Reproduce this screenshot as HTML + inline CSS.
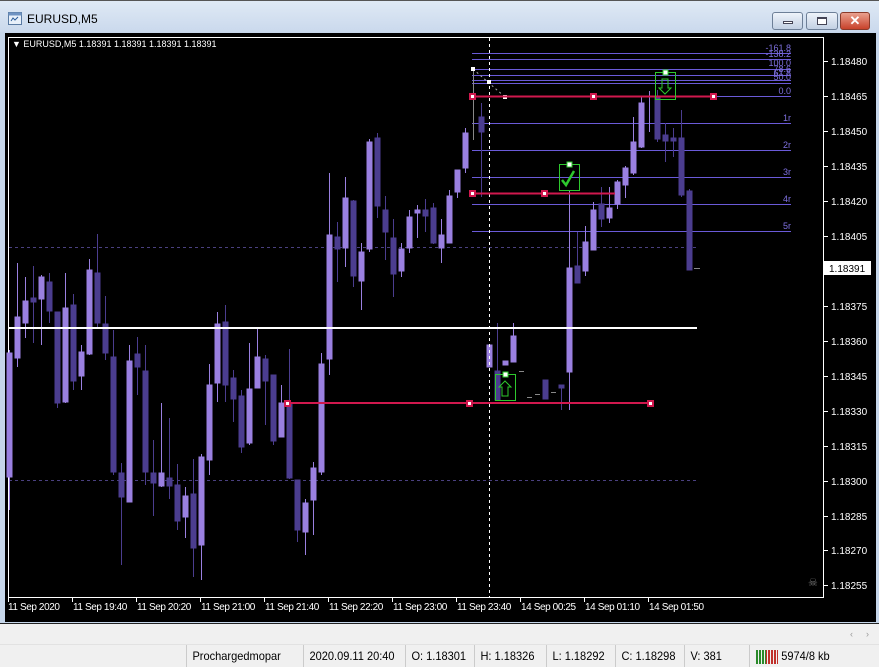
<!DOCTYPE html>
<html><head><meta charset="utf-8"><style>
*{margin:0;padding:0;box-sizing:border-box}
body{width:879px;height:667px;overflow:hidden;position:relative;background:#f0f0f0;font-family:"Liberation Sans",sans-serif}
.title{position:absolute;left:0;top:0;width:879px;height:34px;background:linear-gradient(#dfe9f5,#c9d8ec);border-top:1px solid #555}
.frame{position:absolute;left:0;top:32px;width:879px;height:592px;background:#c6d6ea}
.chart{position:absolute;left:5px;top:33px;width:871px;height:589px;background:#000}
.btn{position:absolute;top:11px;height:18px;border:1px solid #6d7f97;border-radius:3px;background:linear-gradient(#eef3fa,#c2d0e3)}
.sb{position:absolute;top:645px;height:22px;font-size:12px;color:#000;line-height:22px;border-left:1px solid #c8c8c8;padding-left:6px;transform:scaleX(.92);transform-origin:left}
</style></head><body>
<div class="title">
<svg style="position:absolute;left:8px;top:11px" width="14" height="13"><rect x="0.5" y="0.5" width="13" height="12" fill="#e8f0fa" stroke="#5a7ba3"/><rect x="0.5" y="0.5" width="13" height="3" fill="#6f93c2"/><path d="M3 9 L5 6 L7 8 L10 5" stroke="#2a5c9a" fill="none"/></svg>
<div style="position:absolute;left:27px;top:11px;font-size:12px;color:#000">EURUSD,M5</div>
<div class="btn" style="left:772px;width:31px"><div style="position:absolute;left:10px;top:8px;width:10px;height:3px;background:#fff;border:1px solid #445"></div></div>
<div class="btn" style="left:806px;width:32px"><div style="position:absolute;left:10px;top:4px;width:10px;height:8px;background:#fff;border:1px solid #445;border-top-width:2px"></div></div>
<div class="btn" style="left:840px;width:30px;background:linear-gradient(#e9a08e,#c8422b);border-color:#8a3a2a;color:#fff;font-size:13px;font-weight:bold;text-align:center;line-height:16px">✕</div>
</div>
<div class="frame"></div>
<div class="chart"></div>
<svg style="position:absolute;left:0;top:0" width="879" height="667" font-family="Liberation Sans, sans-serif">
<rect x="8.5" y="37.5" width="815" height="560" fill="none" stroke="#fff"/>
<text x="12" y="47" font-size="9" fill="#fff">▼ EURUSD,M5  1.18391 1.18391 1.18391 1.18391</text>
<g stroke="#4a4080" stroke-dasharray="3,3"><line x1="9" y1="247.5" x2="697" y2="247.5"/><line x1="9" y1="480.5" x2="697" y2="480.5"/></g>
<g stroke="#6a5ad8"><line x1="472" y1="53.5" x2="791" y2="53.5"/><line x1="472" y1="59.5" x2="791" y2="59.5"/><line x1="472" y1="69.5" x2="791" y2="69.5"/><line x1="472" y1="75.5" x2="791" y2="75.5"/><line x1="472" y1="80.5" x2="791" y2="80.5"/><line x1="472" y1="83.5" x2="791" y2="83.5"/><line x1="472" y1="96.5" x2="791" y2="96.5"/><line x1="472" y1="123.5" x2="791" y2="123.5"/><line x1="472" y1="150.5" x2="791" y2="150.5"/><line x1="472" y1="177.5" x2="791" y2="177.5"/><line x1="472" y1="204.5" x2="791" y2="204.5"/><line x1="472" y1="231.5" x2="791" y2="231.5"/></g>
<g font-size="9" fill="#7e70e0" text-anchor="end"><text x="791" y="51">-161.8</text><text x="791" y="57">-138.2</text><text x="791" y="66">100.0</text><text x="791" y="72">78.6</text><text x="791" y="76">61.8</text><text x="791" y="80">50.0</text><text x="791" y="94">0.0</text><text x="791" y="121">1r</text><text x="791" y="148">2r</text><text x="791" y="175">3r</text><text x="791" y="202">4r</text><text x="791" y="229">5r</text></g>
<line x1="473.5" y1="69" x2="473.5" y2="140" stroke="#888"/><path d="M473 69 L505 97" stroke="#aaa" stroke-dasharray="2,3"/>
<g fill="#fff"><rect x="471" y="67" width="4" height="4"/><rect x="487" y="80" width="4" height="4"/><rect x="503" y="95" width="4" height="4"/></g>
<g id="c">
<g stroke="#9a80e0" fill="#9a80e0">
<line x1="17.5" y1="263" x2="17.5" y2="367"/><rect x="15" y="317" width="5" height="41"/>
<line x1="9.5" y1="350" x2="9.5" y2="510"/><rect x="7" y="353" width="5" height="124"/>
<line x1="25.5" y1="277" x2="25.5" y2="338"/><rect x="23" y="301" width="5" height="22"/>
<line x1="41.5" y1="275" x2="41.5" y2="345"/><rect x="39" y="277" width="5" height="22"/>
<line x1="65.5" y1="273" x2="65.5" y2="403"/><rect x="63" y="308" width="5" height="94"/>
<line x1="81.5" y1="345" x2="81.5" y2="390"/><rect x="79" y="352" width="5" height="24"/>
<line x1="89.5" y1="259" x2="89.5" y2="355"/><rect x="87" y="270" width="5" height="84"/>
<line x1="129.5" y1="345" x2="129.5" y2="502"/><rect x="127" y="361" width="5" height="141"/>
<line x1="161.5" y1="403" x2="161.5" y2="487"/><rect x="159" y="473" width="5" height="13"/>
<line x1="185.5" y1="487" x2="185.5" y2="538"/><rect x="183" y="496" width="5" height="21"/>
<line x1="201.5" y1="454" x2="201.5" y2="580"/><rect x="199" y="457" width="5" height="88"/>
<line x1="209.5" y1="364" x2="209.5" y2="475"/><rect x="207" y="385" width="5" height="75"/>
<line x1="217.5" y1="312" x2="217.5" y2="402"/><rect x="215" y="324" width="5" height="59"/>
<line x1="249.5" y1="343" x2="249.5" y2="445"/><rect x="247" y="389" width="5" height="54"/>
<line x1="257.5" y1="327" x2="257.5" y2="388"/><rect x="255" y="357" width="5" height="31"/>
<line x1="281.5" y1="385" x2="281.5" y2="437"/><rect x="279" y="403" width="5" height="34"/>
<line x1="305.5" y1="499" x2="305.5" y2="555"/><rect x="303" y="503" width="5" height="29"/>
<line x1="313.5" y1="462" x2="313.5" y2="535"/><rect x="311" y="468" width="5" height="32"/>
<line x1="321.5" y1="353" x2="321.5" y2="475"/><rect x="319" y="364" width="5" height="108"/>
<line x1="329.5" y1="173" x2="329.5" y2="375"/><rect x="327" y="235" width="5" height="124"/>
<line x1="345.5" y1="177" x2="345.5" y2="267"/><rect x="343" y="198" width="5" height="50"/>
<line x1="361.5" y1="243" x2="361.5" y2="310"/><rect x="359" y="252" width="5" height="29"/>
<line x1="369.5" y1="139" x2="369.5" y2="252"/><rect x="367" y="142" width="5" height="107"/>
<line x1="401.5" y1="243" x2="401.5" y2="277"/><rect x="399" y="249" width="5" height="22"/>
<line x1="409.5" y1="210" x2="409.5" y2="253"/><rect x="407" y="217" width="5" height="31"/>
<line x1="417.5" y1="205" x2="417.5" y2="238"/><rect x="415" y="210" width="5" height="3"/>
<line x1="441.5" y1="219" x2="441.5" y2="263"/><rect x="439" y="235" width="5" height="13"/>
<line x1="449.5" y1="190" x2="449.5" y2="243"/><rect x="447" y="196" width="5" height="47"/>
<line x1="457.5" y1="170" x2="457.5" y2="198"/><rect x="455" y="170" width="5" height="22"/>
<line x1="465.5" y1="128" x2="465.5" y2="173"/><rect x="463" y="133" width="5" height="35"/>
<rect x="487" y="345" width="5" height="22"/>
<rect x="503" y="361" width="5" height="4"/>
<line x1="513.5" y1="323" x2="513.5" y2="362"/><rect x="511" y="336" width="5" height="26"/>
<line x1="569.5" y1="190" x2="569.5" y2="410"/><rect x="567" y="268" width="5" height="104"/>
<line x1="585.5" y1="226" x2="585.5" y2="276"/><rect x="583" y="242" width="5" height="29"/>
<line x1="593.5" y1="202" x2="593.5" y2="250"/><rect x="591" y="210" width="5" height="40"/>
<line x1="609.5" y1="187" x2="609.5" y2="223"/><rect x="607" y="208" width="5" height="10"/>
<line x1="617.5" y1="180" x2="617.5" y2="209"/><rect x="615" y="182" width="5" height="22"/>
<line x1="625.5" y1="166" x2="625.5" y2="198"/><rect x="623" y="168" width="5" height="17"/>
<line x1="633.5" y1="117" x2="633.5" y2="175"/><rect x="631" y="142" width="5" height="31"/>
<line x1="641.5" y1="97" x2="641.5" y2="148"/><rect x="639" y="103" width="5" height="44"/>
<line x1="649.5" y1="91" x2="649.5" y2="132"/>
</g>
<g stroke="#4b3d8f" fill="#4b3d8f">
<line x1="33.5" y1="266" x2="33.5" y2="343"/><rect x="31" y="298" width="5" height="4"/>
<line x1="49.5" y1="273" x2="49.5" y2="323"/><rect x="47" y="282" width="5" height="29"/>
<line x1="57.5" y1="312" x2="57.5" y2="408"/><rect x="55" y="312" width="5" height="91"/>
<line x1="73.5" y1="294" x2="73.5" y2="390"/><rect x="71" y="305" width="5" height="76"/>
<line x1="97.5" y1="234" x2="97.5" y2="327"/><rect x="95" y="273" width="5" height="50"/>
<line x1="105.5" y1="296" x2="105.5" y2="360"/><rect x="103" y="324" width="5" height="29"/>
<line x1="113.5" y1="330" x2="113.5" y2="475"/><rect x="111" y="357" width="5" height="115"/>
<line x1="121.5" y1="463" x2="121.5" y2="565"/><rect x="119" y="473" width="5" height="24"/>
<line x1="137.5" y1="337" x2="137.5" y2="395"/><rect x="135" y="354" width="5" height="13"/>
<line x1="145.5" y1="345" x2="145.5" y2="485"/><rect x="143" y="371" width="5" height="101"/>
<line x1="153.5" y1="440" x2="153.5" y2="516"/><rect x="151" y="473" width="5" height="10"/>
<line x1="169.5" y1="418" x2="169.5" y2="499"/><rect x="167" y="478" width="5" height="8"/>
<line x1="177.5" y1="464" x2="177.5" y2="530"/><rect x="175" y="485" width="5" height="36"/>
<line x1="193.5" y1="459" x2="193.5" y2="577"/><rect x="191" y="494" width="5" height="54"/>
<line x1="225.5" y1="305" x2="225.5" y2="402"/><rect x="223" y="322" width="5" height="63"/>
<line x1="233.5" y1="370" x2="233.5" y2="422"/><rect x="231" y="378" width="5" height="21"/>
<line x1="241.5" y1="390" x2="241.5" y2="453"/><rect x="239" y="396" width="5" height="51"/>
<line x1="265.5" y1="355" x2="265.5" y2="425"/><rect x="263" y="359" width="5" height="22"/>
<line x1="273.5" y1="375" x2="273.5" y2="445"/><rect x="271" y="375" width="5" height="66"/>
<line x1="289.5" y1="349" x2="289.5" y2="479"/><rect x="287" y="403" width="5" height="75"/>
<line x1="297.5" y1="480" x2="297.5" y2="542"/><rect x="295" y="480" width="5" height="50"/>
<line x1="337.5" y1="222" x2="337.5" y2="282"/><rect x="335" y="237" width="5" height="12"/>
<line x1="353.5" y1="200" x2="353.5" y2="287"/><rect x="351" y="201" width="5" height="75"/>
<line x1="377.5" y1="133" x2="377.5" y2="218"/><rect x="375" y="138" width="5" height="68"/>
<line x1="385.5" y1="196" x2="385.5" y2="260"/><rect x="383" y="210" width="5" height="22"/>
<line x1="393.5" y1="219" x2="393.5" y2="297"/><rect x="391" y="238" width="5" height="36"/>
<line x1="425.5" y1="199" x2="425.5" y2="232"/><rect x="423" y="210" width="5" height="6"/>
<line x1="433.5" y1="203" x2="433.5" y2="244"/><rect x="431" y="208" width="5" height="35"/>
<line x1="481.5" y1="103" x2="481.5" y2="197"/><rect x="479" y="117" width="5" height="15"/>
<line x1="497.5" y1="323" x2="497.5" y2="400"/><rect x="495" y="371" width="5" height="29"/>
<rect x="543" y="380" width="5" height="19"/>
<line x1="561.5" y1="385" x2="561.5" y2="410"/><rect x="559" y="385" width="5" height="3"/>
<line x1="577.5" y1="232" x2="577.5" y2="283"/><rect x="575" y="266" width="5" height="17"/>
<line x1="601.5" y1="187" x2="601.5" y2="227"/><rect x="599" y="204" width="5" height="15"/>
<line x1="657.5" y1="90" x2="657.5" y2="142"/><rect x="655" y="98" width="5" height="41"/>
<line x1="665.5" y1="123" x2="665.5" y2="162"/><rect x="663" y="135" width="5" height="6"/>
<line x1="673.5" y1="128" x2="673.5" y2="157"/><rect x="671" y="138" width="5" height="3"/>
<line x1="681.5" y1="110" x2="681.5" y2="197"/><rect x="679" y="138" width="5" height="57"/>
<line x1="689.5" y1="189" x2="689.5" y2="270"/><rect x="687" y="191" width="5" height="79"/>
</g>
<g stroke="#888"><line x1="519" y1="371.5" x2="524" y2="371.5"/><line x1="527" y1="397.5" x2="532" y2="397.5"/><line x1="535" y1="394.5" x2="540" y2="394.5"/><line x1="551" y1="392.5" x2="556" y2="392.5"/><line x1="694" y1="268.5" x2="700" y2="268.5"/></g>
</g>
<line x1="9" y1="328" x2="697" y2="328" stroke="#fff" stroke-width="2"/>
<line x1="489.5" y1="38" x2="489.5" y2="597" stroke="#fff" stroke-dasharray="3,3"/>
<g stroke="#d0184e" stroke-width="2"><line x1="472" y1="96.5" x2="713" y2="96.5"/><line x1="472" y1="193.5" x2="615" y2="193.5"/><line x1="287" y1="403" x2="650" y2="403"/></g>
<g fill="#d0184e"><rect x="469" y="93" width="7" height="7"/><rect x="590" y="93" width="7" height="7"/><rect x="710" y="93" width="7" height="7"/><rect x="469" y="190" width="7" height="7"/><rect x="541" y="190" width="7" height="7"/><rect x="284" y="400" width="7" height="7"/><rect x="466" y="400" width="7" height="7"/><rect x="647" y="400" width="7" height="7"/></g>
<g fill="#fff"><rect x="471" y="95" width="3" height="3"/><rect x="592" y="95" width="3" height="3"/><rect x="712" y="95" width="3" height="3"/><rect x="471" y="192" width="3" height="3"/><rect x="543" y="192" width="3" height="3"/><rect x="286" y="402" width="3" height="3"/><rect x="468" y="402" width="3" height="3"/><rect x="649" y="402" width="3" height="3"/></g>
<g stroke="#2ec82e" fill="none">
<rect x="559.5" y="164.5" width="20" height="26"/><rect x="655.5" y="72.5" width="20" height="27"/><rect x="495.5" y="374.5" width="20" height="26"/>
<path d="M562 180 L566 185 L574 171" stroke-width="2.5"/>
<path d="M662 79 L668 79 L668 88 L671 88 L665 94 L659 88 L662 88 Z"/>
<path d="M502 396 L508 396 L508 387 L511 387 L505 381 L499 387 L502 387 Z"/>
</g>
<g fill="#fff" stroke="#2ec82e"><rect x="567" y="162" width="5" height="5"/><rect x="663" y="70" width="5" height="5"/><rect x="503" y="372" width="5" height="5"/></g>
<g stroke="#fff"><line x1="824" y1="61.5" x2="828" y2="61.5"/><line x1="824" y1="96.5" x2="828" y2="96.5"/><line x1="824" y1="131.5" x2="828" y2="131.5"/><line x1="824" y1="166.5" x2="828" y2="166.5"/><line x1="824" y1="201.5" x2="828" y2="201.5"/><line x1="824" y1="236.5" x2="828" y2="236.5"/><line x1="824" y1="306.5" x2="828" y2="306.5"/><line x1="824" y1="341.5" x2="828" y2="341.5"/><line x1="824" y1="376.5" x2="828" y2="376.5"/><line x1="824" y1="411.5" x2="828" y2="411.5"/><line x1="824" y1="446.5" x2="828" y2="446.5"/><line x1="824" y1="481.5" x2="828" y2="481.5"/><line x1="824" y1="516.5" x2="828" y2="516.5"/><line x1="824" y1="550.5" x2="828" y2="550.5"/><line x1="824" y1="585.5" x2="828" y2="585.5"/></g>
<g font-size="10" fill="#fff"><text x="831" y="65">1.18480</text><text x="831" y="100">1.18465</text><text x="831" y="135">1.18450</text><text x="831" y="170">1.18435</text><text x="831" y="205">1.18420</text><text x="831" y="240">1.18405</text><text x="831" y="310">1.18375</text><text x="831" y="345">1.18360</text><text x="831" y="380">1.18345</text><text x="831" y="415">1.18330</text><text x="831" y="450">1.18315</text><text x="831" y="485">1.18300</text><text x="831" y="520">1.18285</text><text x="831" y="554">1.18270</text><text x="831" y="589">1.18255</text></g>
<rect x="824" y="261" width="47" height="14" fill="#fff"/><text x="829" y="272" font-size="10" fill="#000">1.18391</text>
<text x="808" y="586" font-size="11" fill="#777">☠</text>
<g stroke="#fff"><line x1="8.5" y1="598" x2="8.5" y2="602"/><line x1="72.5" y1="598" x2="72.5" y2="602"/><line x1="136.5" y1="598" x2="136.5" y2="602"/><line x1="200.5" y1="598" x2="200.5" y2="602"/><line x1="264.5" y1="598" x2="264.5" y2="602"/><line x1="328.5" y1="598" x2="328.5" y2="602"/><line x1="392.5" y1="598" x2="392.5" y2="602"/><line x1="456.5" y1="598" x2="456.5" y2="602"/><line x1="520.5" y1="598" x2="520.5" y2="602"/><line x1="584.5" y1="598" x2="584.5" y2="602"/><line x1="648.5" y1="598" x2="648.5" y2="602"/></g>
<g font-size="10" fill="#fff" letter-spacing="-0.4"><text x="8" y="610">11 Sep 2020</text><text x="73" y="610">11 Sep 19:40</text><text x="137" y="610">11 Sep 20:20</text><text x="201" y="610">11 Sep 21:00</text><text x="265" y="610">11 Sep 21:40</text><text x="329" y="610">11 Sep 22:20</text><text x="393" y="610">11 Sep 23:00</text><text x="457" y="610">11 Sep 23:40</text><text x="521" y="610">14 Sep 00:25</text><text x="585" y="610">14 Sep 01:10</text><text x="649" y="610">14 Sep 01:50</text></g>
<line x1="0" y1="623.5" x2="879" y2="623.5" stroke="#222"/>
<text x="850" y="637" font-size="9" fill="#999">‹</text><text x="866" y="637" font-size="9" fill="#999">›</text>
<line x1="0" y1="644.5" x2="879" y2="644.5" stroke="#e2e2e2"/>
<g><rect x="756" y="650" width="22" height="14" fill="#2a8a2a"/><rect x="766" y="650" width="12" height="14" fill="#c0302a"/><g stroke="#f0f0f0"><line x1="758.5" y1="650" x2="758.5" y2="664"/><line x1="761.5" y1="650" x2="761.5" y2="664"/><line x1="764.5" y1="650" x2="764.5" y2="664"/><line x1="767.5" y1="650" x2="767.5" y2="664"/><line x1="770.5" y1="650" x2="770.5" y2="664"/><line x1="773.5" y1="650" x2="773.5" y2="664"/><line x1="776.5" y1="650" x2="776.5" y2="664"/></g></g>
</svg>
<div class="sb" style="left:186px">Prochargedmopar</div>
<div class="sb" style="left:303px">2020.09.11 20:40</div>
<div class="sb" style="left:405px">O: 1.18301</div>
<div class="sb" style="left:474px">H: 1.18326</div>
<div class="sb" style="left:546px">L: 1.18292</div>
<div class="sb" style="left:615px">C: 1.18298</div>
<div class="sb" style="left:684px">V: 381</div>
<div class="sb" style="left:749px;border-left:1px solid #c8c8c8;padding-left:34px">5974/8 kb</div>
</body></html>
